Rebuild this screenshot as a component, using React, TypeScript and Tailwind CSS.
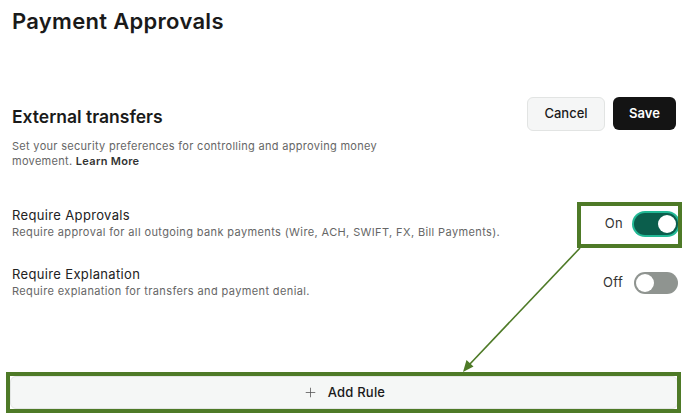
import { Plus } from "lucide-react";

function Toggle({ on }: { on: boolean }) {
  return (
    <div
      className={
        on
          ? "flex h-[22px] w-[44px] items-center justify-end rounded-full bg-[#0b5e4c] px-[2px] ring-2 ring-[#22b995]"
          : "flex h-[22px] w-[44px] items-center justify-start rounded-full bg-[#8f9490] px-[2px]"
      }
    >
      <div className="h-[18px] w-[18px] rounded-full bg-white" />
    </div>
  );
}

function SettingRow({ title, desc, on }: { title: string; desc: string; on: boolean }) {
  return (
    <div className="flex items-center justify-between">
      <div>
        <p className="text-[13px] leading-5 tracking-[0.35px] text-[#222]">{title}</p>
        <p className="text-[11px] leading-[15px] tracking-[0.38px] text-[#666]">{desc}</p>
      </div>
      <div className="mr-[-2px] flex items-center gap-[11px] pt-[2px]">
        <span className="text-[13px] tracking-[0.3px] text-[#333]">{on ? "On" : "Off"}</span>
        <Toggle on={on} />
      </div>
    </div>
  );
}

export default function App() {
  return (
    <div
      className="relative h-[420px] w-[687px] overflow-hidden bg-white pl-3 pr-[11px]"
      style={{ fontFamily: "Inter, 'Noto Sans', sans-serif" }}
    >
      <h1 className="pt-[7px] text-[22px] font-semibold leading-7 tracking-[0.3px] text-[#1a1a1a]">Payment Approvals</h1>

      <div className="mt-[62px] flex items-center justify-between">
        <h2 className="mt-[5px] text-[17.5px] font-semibold leading-6 text-[#1a1a1a]">External transfers</h2>
        <div className="flex gap-2">
          <button className="h-[34px] w-[78px] rounded-md border border-[#e2e4e3] bg-[#f5f6f6] text-[13px] font-medium text-[#1a1a1a]">
            Cancel
          </button>
          <button className="h-[33px] w-[63px] rounded-md bg-[#141414] text-[13px] font-semibold text-white">
            Save
          </button>
        </div>
      </div>

      <p className="mt-2 w-[400px] text-[11px] leading-[15px] tracking-[0.3px] text-[#666]">
        Set your security preferences for controlling and approving money movement.{" "}
        <span className="font-semibold text-[#333]">Learn More</span>
      </p>

      <div className="mt-[36px]">
        <SettingRow
          title="Require Approvals"
          desc="Require approval for all outgoing bank payments (Wire, ACH, SWIFT, FX, Bill Payments)."
          on={true}
        />
      </div>
      <div className="mt-6">
        <SettingRow title="Require Explanation" desc="Require explanation for transfers and payment denial." on={false} />
      </div>

      <div className="mx-[-2px] mt-[77px]">
        <button className="flex h-[33px] w-full items-center justify-center gap-[10px] rounded-md border border-[#e3e6e4] bg-[#f5f7f6] text-[13px] font-medium tracking-[0.2px] text-[#1a1a1a]">
          <Plus size={15} strokeWidth={1.25} className="text-[#555]" />
          Add Rule
        </button>
      </div>

      <svg className="pointer-events-none absolute left-0 top-0" width="687" height="420" viewBox="0 0 687 420">
        <rect x="579" y="204" width="101" height="42" fill="none" stroke="#4e7a27" strokeWidth="4" />
        <rect x="8" y="374" width="671" height="37" fill="none" stroke="#4e7a27" strokeWidth="4" />
        <line x1="580" y1="248" x2="469" y2="365" stroke="#4e7a27" strokeWidth="1.6" />
        <polygon points="463,372 473.5,366.5 466.5,360" fill="#4e7a27" />
      </svg>
    </div>
  );
}
